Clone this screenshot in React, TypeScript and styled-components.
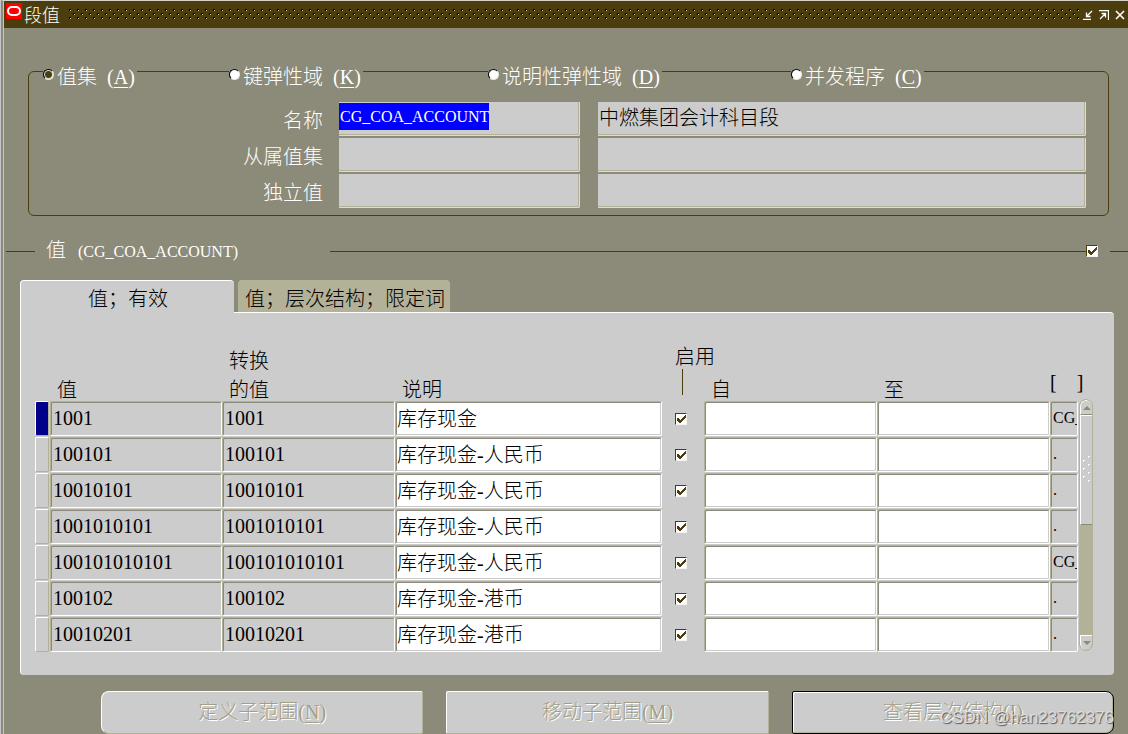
import React, { useEffect, useRef } from "react";
import styled, { createGlobalStyle } from "styled-components";

const c = {
  canvas: "#8c8a78",
  bar: "#4b3d0d",
  panel: "#cccccc",
  tan: "#b3b197",
  shade: "#8c8a78",
  select: "#0000ff",
  current: "#00008b",
};

const song = '"Liberation Serif", "Noto Sans CJK SC", serif';

const GlobalStyle = createGlobalStyle`
  *, *::before, *::after { box-sizing: border-box; }
  body {
    margin: 0;
    background: ${c.canvas};
    font-family: ${song};
    font-size: 20px;
    font-weight: 300;
    line-height: 28px;
    color: #000;
  }
  input, button { font: inherit; color: inherit; margin: 0; }
`;

const Window = styled.main`
  position: relative;
  min-height: 100vh;
  border-left: 4px double #c4c6cc;
  border-top: 1px solid #d4d4cc;
  background: ${c.canvas};
`;

const TitleBar = styled.header`
  display: flex;
  align-items: center;
  height: 27px;
  padding-left: 2px;
  background: ${c.bar};
  color: #fff;
`;

const AppIcon = styled.svg`
  flex: none;
  align-self: flex-start;
  margin-top: 2px;
`;

const Title = styled.h1`
  flex: none;
  margin: 0 8px 0 2px;
  padding-top: 2px;
  font-size: 18px;
  font-weight: 300;
  line-height: 26px;
`;

const Grip = styled.svg`
  flex: 1;
  min-width: 0;
  height: 12px;
`;

const WindowButton = styled.button`
  display: flex;
  align-items: center;
  justify-content: center;
  width: 16px;
  height: 20px;
  padding: 0;
  border: 0;
  background: none;
`;

const Group = styled.section`
  margin: 43px 19px 0 24px;
  padding: 0 22px 7px 14px;
  border: 1px solid ${c.bar};
  border-radius: 6px;
`;

const RadioRow = styled.div`
  display: grid;
  grid-template-columns: 186px 259px 303px auto;
  justify-items: start;
  margin-top: -9px;
`;

const RadioLabel = styled.label`
  display: flex;
  align-items: center;
  gap: 3px;
  height: 28px;
  padding-right: 2px;
  background: ${c.canvas};
  color: #fff;
  white-space: pre;
`;

const Radio = styled.input`
  appearance: none;
  width: 11px;
  height: 11px;
  margin: 0 0 5px;
  border: 1px solid #000;
  border-color: #000 #e8e8e0 #e8e8e0 #000;
  border-radius: 50%;
  background: #fff;
  &:checked {
    background: radial-gradient(circle, ${c.bar} 3px, #d8d8cc 4px);
  }
`;

const Code = styled.span`
  font-size: 16px;
  white-space: pre;
`;

const Key = styled.u`
  text-underline-offset: 3px;
  text-decoration-thickness: 1px;
`;

const FieldRows = styled.div`
  display: grid;
  grid-template-columns: 280px 257px 1fr;
  row-gap: 2px;
  margin-top: 11px;
`;

const FieldLabel = styled.label`
  justify-self: end;
  padding-top: 5px;
  color: #fff;
`;

const Field = styled.input<{ $code?: boolean }>`
  min-width: 0;
  height: 34px;
  margin-left: ${(p) => (p.$code === undefined ? 18 : 16)}px;
  padding: 0 0 4px 1px;
  border: solid #dcdcd0;
  border-width: 0 1px 1px 0;
  border-radius: 0 0 2px 0;
  outline: 0;
  background: ${c.panel};
  box-shadow: inset -1px -1px 0 ${c.tan};
  font-size: ${(p) => (p.$code ? 16 : 20)}px;
  &::selection { background: ${c.select}; color: #fff; }
`;

/* The focused code field carries a full-height selection bar behind its text. */
const CodeField = styled(Field)`
  &:focus {
    background: linear-gradient(${c.select}, ${c.select}) 0 1px / 150px 27px no-repeat ${c.panel};
  }
`;

const SectionHead = styled.div`
  display: flex;
  align-items: center;
  height: 28px;
  margin: 21px 0 0 2px;
  color: #fff;
`;

const Rule = styled.span<{ $width?: number }>`
  flex: ${(p) => (p.$width ? `0 0 ${p.$width}px` : "1")};
  height: 1px;
  background: ${c.bar};
`;

const SectionTitle = styled.h2`
  flex: 0 0 295px;
  margin: 0;
  padding-left: 11px;
  font-size: 20px;
  font-weight: 300;
  white-space: pre;
`;

const SectionTick = styled.div`
  display: flex;
  padding-right: 12px;
`;

const TickBox = styled.span`
  display: inline-grid;
  width: 12px;
  height: 12px;
  & > * { grid-area: 1 / 1; }
`;

const TickInput = styled.input`
  appearance: none;
  width: 12px;
  height: 12px;
  border: 1px solid;
  border-color: ${c.bar} #f4f4f4 #f4f4f4 ${c.bar};
  background: #fff;
  &:not(:checked) + svg { visibility: hidden; }
`;

const TickMark = styled.svg`
  pointer-events: none;
`;

const Tabs = styled.div`
  display: flex;
  align-items: flex-start;
  gap: 4px;
  height: 32px;
  margin: 15px 14px 0 16px;
`;

const Tab = styled.button<{ $active?: boolean }>`
  flex: none;
  width: ${(p) => (p.$active ? 214 : 212)}px;
  height: ${(p) => (p.$active ? 34 : 32)}px;
  padding: ${(p) => (p.$active ? "2px 0 0 1px" : "5px 0 0 2px")};
  border: 0 solid #fff;
  border-width: ${(p) => (p.$active ? "1px 0 0 1px" : "0")};
  border-radius: 4px 4px 0 0;
  background: ${(p) => (p.$active ? c.panel : c.tan)};
  white-space: nowrap;
  z-index: ${(p) => (p.$active ? 1 : 0)};
`;

const Panel = styled.section`
  display: flex;
  align-items: stretch;
  gap: 1px;
  margin: 0 14px 0 16px;
  padding: 27px 21px 22px 14px;
  border: solid #fff;
  border-width: 1px 0 0 1px;
  border-radius: 0 4px 4px 4px;
  background: ${c.panel};
`;

const Grid = styled.table`
  flex: 1;
  min-width: 0;
  width: 100%;
  border-collapse: collapse;
  table-layout: fixed;
`;

const Col = styled.col<{ $width?: number }>`
  width: ${(p) => (p.$width ? `${p.$width}px` : "auto")};
`;

const Head = styled.th`
  height: 61px;
  padding: 0 0 0 7px;
  font-weight: 300;
  line-height: 29px;
  text-align: left;
  vertical-align: bottom;
  white-space: nowrap;
`;

const HeadText = styled.div`
  margin-bottom: -4px;
`;

const EnabledHead = styled(Head)`
  padding-left: 13px;
  line-height: 24px;
`;

const Stem = styled.span`
  display: block;
  width: 1px;
  height: 26px;
  margin: 0 0 6px 7px;
  background: ${c.bar};
`;

const FlexHead = styled(Head)`
  padding: 0 0 4px;
  white-space: pre;
`;

const Cell = styled.td`
  height: 36px;
  padding: 0;
  line-height: 0;
  vertical-align: top;
`;

const TickCell = styled(Cell)`
  padding: 12px 0 0 13px;
`;

const Marker = styled.span<{ $current?: boolean }>`
  display: block;
  width: 14px;
  height: 35px;
  border: 1px solid;
  border-color: #fff ${c.tan} ${c.tan} #fff;
  border-radius: 2px;
  background: ${(p) => (p.$current ? c.current : c.panel)};
`;

const CellInput = styled.input<{ $tone: "grey" | "white"; $code?: boolean }>`
  display: block;
  width: 100%;
  height: 35px;
  padding: ${(p) => (p.$tone === "grey" ? "0 0 1px 2px" : "0 0 2px 1px")};
  border: 1px solid;
  border-color: ${c.tan} #fff #fff ${c.tan};
  border-radius: 2px;
  outline: 0;
  background: ${(p) => (p.$tone === "grey" ? c.panel : "#fff")};
  box-shadow: inset 1px 1px 0 ${c.shade}, inset -1px -1px 0 ${c.panel};
  font-size: ${(p) => (p.$code ? 16 : 20)}px;
`;

const Scroll = styled.div`
  display: flex;
  flex-direction: column;
  width: 14px;
  margin: 59px 0 2px;
  border: 1px solid ${c.tan};
  border-radius: 7px;
  background: ${c.tan};
  overflow: hidden;
`;

const ScrollButton = styled.button`
  display: flex;
  flex: none;
  align-items: center;
  justify-content: center;
  height: 15px;
  padding: 0;
  border: solid #fff;
  border-width: 1px 0 0 1px;
  background: ${c.panel};
  &:first-child {
    border-bottom: 1px solid ${c.shade};
    border-radius: 6px 6px 0 0;
  }
  &:last-child {
    border-radius: 0 0 6px 6px;
  }
`;

const Thumb = styled.div`
  display: flex;
  align-items: center;
  justify-content: center;
  height: 110px;
  margin-bottom: auto;
  border: solid #fff;
  border-width: 1px 0 0 1px;
  border-bottom: 1px solid ${c.shade};
  background: ${c.panel};
`;

const Actions = styled.footer`
  display: flex;
  gap: 23px;
  margin: 16px 14px 0 97px;
`;

const ActionButton = styled.button<{ $edge?: "first" | "last" }>`
  flex: 1;
  height: 43px;
  padding: 0 0 2px;
  border: 1px solid;
  border-color: ${(p) => (p.$edge === "last" ? "#000" : `#fff ${c.tan} ${c.tan} #fff`)};
  border-radius: ${(p) =>
    p.$edge === "first" ? "8px 2px 2px 8px" : p.$edge === "last" ? "2px 8px 8px 2px" : "2px"};
  background: ${c.panel};
  color: #a19f88;
  text-shadow: 1px 1px 0 #fff;
  box-shadow: ${(p) => (p.$edge === "last" ? `inset 1px 1px 0 #fff, inset -1px -1px 0 ${c.tan}` : "none")};
`;

const Watermark = styled.span`
  position: absolute;
  right: 14px;
  bottom: 6px;
  font-family: "Liberation Sans", Arial, sans-serif;
  font-size: 17px;
  font-weight: 400;
  line-height: 20px;
  color: #dcdcdc;
  text-shadow: 1px 1px 1px #555;
  pointer-events: none;
`;

const radios = [
  { id: "a", text: "值集", key: "A" },
  { id: "k", text: "键弹性域", key: "K" },
  { id: "d", text: "说明性弹性域", key: "D" },
  { id: "c", text: "并发程序", key: "C" },
];

const rows = [
  { value: "1001", desc: "库存现金", flex: "CG_" },
  { value: "100101", desc: "库存现金-人民币", flex: "." },
  { value: "10010101", desc: "库存现金-人民币", flex: "." },
  { value: "1001010101", desc: "库存现金-人民币", flex: "." },
  { value: "100101010101", desc: "库存现金-人民币", flex: "CG_" },
  { value: "100102", desc: "库存现金-港币", flex: "." },
  { value: "10010201", desc: "库存现金-港币", flex: "." },
];

const columnWidths = [15, 172, 173, undefined, 42, 173, 173, 28];

function Tick({ label }: { label: string }) {
  return (
    <TickBox>
      <TickInput type="checkbox" defaultChecked aria-label={label} />
      <TickMark width="12" height="12" viewBox="0 0 12 12" aria-hidden="true">
        <path d="M2 5h2v1h1v1h1V6h1V5h1V4h1V3h1V2h1v3h-1v1H9v1H8v1H7v1H6v1H4V9H3V8H2z" fill={c.bar} />
      </TickMark>
    </TickBox>
  );
}

export default function App() {
  const nameRef = useRef<HTMLInputElement>(null);

  useEffect(() => {
    nameRef.current?.focus();
    nameRef.current?.select();
  }, []);

  return (
    <Window>
      <GlobalStyle />
      <TitleBar>
        <AppIcon width="16" height="16" viewBox="0 0 16 16" aria-hidden="true">
          <rect width="16" height="16" fill="#f00" />
          <rect x="2" y="4" width="12" height="8" rx="4" fill="none" stroke="#fff" strokeWidth="2" />
        </AppIcon>
        <Title>段值</Title>
        <Grip aria-hidden="true">
          <defs>
            <pattern id="grip" width="8" height="8" patternUnits="userSpaceOnUse">
              <path d="M1 0h2v1H2v1H1zM5 4h2v1H6v1H5z" fill="#000" />
              <path d="M2 1h1v1H2zM6 5h1v1H6z" fill="#e4dcae" />
            </pattern>
          </defs>
          <rect width="100%" height="12" fill="url(#grip)" />
        </Grip>
        <WindowButton aria-label="最小化">
          <svg width="10" height="10" viewBox="0 0 10 10">
            <path d="M0 9.5h8M9 1L4 6M3.5 2.5v4h4" stroke="#fff" strokeWidth="1.3" fill="none" />
          </svg>
        </WindowButton>
        <WindowButton aria-label="最大化">
          <svg width="10" height="10" viewBox="0 0 10 10">
            <path d="M0 .5h9.5V10M1 9l5-5M2.5 3.5h4v4" stroke="#fff" strokeWidth="1.3" fill="none" />
          </svg>
        </WindowButton>
        <WindowButton aria-label="关闭">
          <svg width="10" height="10" viewBox="0 0 10 10">
            <path d="M1 1l8 8M9 1L1 9" stroke="#fff" strokeWidth="1.6" fill="none" />
          </svg>
        </WindowButton>
      </TitleBar>

      <Group>
        <RadioRow role="radiogroup" aria-label="查找">
          {radios.map((r, i) => (
            <RadioLabel key={r.id} htmlFor={`find-${r.id}`}>
              <Radio type="radio" name="find" id={`find-${r.id}`} defaultChecked={i === 0} />
              <span>
                {r.text}
                {"  ("}
                <Key>{r.key}</Key>
                {")"}
              </span>
            </RadioLabel>
          ))}
        </RadioRow>
        <FieldRows>
          <FieldLabel htmlFor="name">名称</FieldLabel>
          <CodeField ref={nameRef} id="name" $code defaultValue="CG_COA_ACCOUNT" />
          <Field aria-label="名称说明" defaultValue="中燃集团会计科目段" />
          <FieldLabel htmlFor="parent">从属值集</FieldLabel>
          <Field id="parent" $code={false} />
          <Field aria-label="从属值集说明" />
          <FieldLabel htmlFor="independent">独立值</FieldLabel>
          <Field id="independent" $code={false} />
          <Field aria-label="独立值说明" />
        </FieldRows>
      </Group>

      <SectionHead>
        <Rule $width={29} />
        <SectionTitle>
          值<Code>{"   (CG_COA_ACCOUNT)"}</Code>
        </SectionTitle>
        <Rule />
        <SectionTick>
          <Tick label="值" />
        </SectionTick>
        <Rule $width={18} />
      </SectionHead>

      <Tabs role="tablist">
        <Tab role="tab" aria-selected="true" $active>
          值；有效
        </Tab>
        <Tab role="tab" aria-selected="false">
          值；层次结构；限定词
        </Tab>
      </Tabs>

      <Panel role="tabpanel">
        <Grid>
          <colgroup>
            {columnWidths.map((w, i) => (
              <Col key={i} $width={w} />
            ))}
          </colgroup>
          <thead>
            <tr>
              <Head as="td" />
              <Head scope="col">
                <HeadText>值</HeadText>
              </Head>
              <Head scope="col">
                <HeadText>
                  转换
                  <br />
                  的值
                </HeadText>
              </Head>
              <Head scope="col">
                <HeadText>说明</HeadText>
              </Head>
              <EnabledHead scope="col">
                启用
                <Stem />
              </EnabledHead>
              <Head scope="col">
                <HeadText>自</HeadText>
              </Head>
              <Head scope="col">
                <HeadText>至</HeadText>
              </Head>
              <FlexHead scope="col">{"[    ]"}</FlexHead>
            </tr>
          </thead>
          <tbody>
            {rows.map((r, i) => (
              <tr key={i}>
                <Cell>
                  <Marker $current={i === 0} />
                </Cell>
                <Cell>
                  <CellInput $tone="grey" aria-label="值" defaultValue={r.value} />
                </Cell>
                <Cell>
                  <CellInput $tone="grey" aria-label="转换的值" defaultValue={r.value} />
                </Cell>
                <Cell>
                  <CellInput $tone="white" aria-label="说明" defaultValue={r.desc} />
                </Cell>
                <TickCell>
                  <Tick label="启用" />
                </TickCell>
                <Cell>
                  <CellInput $tone="white" aria-label="自" />
                </Cell>
                <Cell>
                  <CellInput $tone="white" aria-label="至" />
                </Cell>
                <Cell>
                  <CellInput $tone="grey" $code aria-label="弹性域" defaultValue={r.flex} />
                </Cell>
              </tr>
            ))}
          </tbody>
        </Grid>
        <Scroll>
          <ScrollButton aria-label="向上">
            <svg width="8" height="4" viewBox="0 0 8 4">
              <path d="M0 4l4-4 4 4z" fill={c.shade} />
            </svg>
          </ScrollButton>
          <Thumb>
            <svg width="8" height="28" viewBox="0 0 8 28" aria-hidden="true">
              {[0, 8, 16, 24].map((y) => (
                <g key={y}>
                  <path d={`M5 ${y}h2v1h-1v1h-1z`} fill="#fff" />
                  <path d={`M6 ${y + 1}h1v1h-1z`} fill={c.tan} />
                  {y < 24 && <path d={`M0 ${y + 4}h2v1h-1v1h-1z`} fill="#fff" />}
                  {y < 24 && <path d={`M1 ${y + 5}h1v1h-1z`} fill={c.tan} />}
                </g>
              ))}
            </svg>
          </Thumb>
          <ScrollButton aria-label="向下">
            <svg width="8" height="4" viewBox="0 0 8 4">
              <path d="M0 0l4 4 4-4z" fill={c.shade} />
            </svg>
          </ScrollButton>
        </Scroll>
      </Panel>

      <Actions>
        <ActionButton disabled $edge="first">
          定义子范围(<Key>N</Key>)
        </ActionButton>
        <ActionButton disabled>
          移动子范围(<Key>M</Key>)
        </ActionButton>
        <ActionButton disabled $edge="last">
          查看层次结构(<Key>I</Key>)
        </ActionButton>
      </Actions>
      <Watermark>CSDN @han23762376</Watermark>
    </Window>
  );
}
